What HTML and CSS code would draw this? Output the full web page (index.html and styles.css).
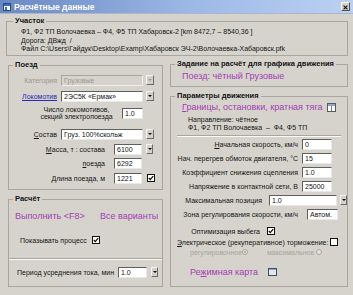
FILE: index.html
```html
<!DOCTYPE html>
<html lang="ru">
<head>
  <meta charset="UTF-8">
  <title>Расчётные данные</title>
  <link rel="stylesheet" href="styles.css">
</head>
<body>
  <div class="window">
    <div class="titlebar">
      <svg class="title-icon" width="8" height="8" viewBox="0 0 8 8">
        <rect x="0.5" y="0.5" width="7" height="7" fill="#fff" stroke="#2b4c8a"/>
        <rect x="1" y="1" width="6" height="2" fill="#3a6ac0"/>
        <rect x="2" y="4" width="2" height="3" fill="#3a6ac0"/>
      </svg>
      <span class="title">Расчётные данные</span>
      <span class="close">
        <svg width="9" height="9" viewBox="0 0 9 9">
          <path d="M2 2 L7 7 M7 2 L2 7" stroke="#111" stroke-width="1.4"/>
        </svg>
      </span>
    </div>

    <div class="body">
      <fieldset class="group section">
        <legend>Участок</legend>
        <div class="info">
          <div>Ф1, Ф2 ТП Волочаевка – Ф4, Ф5 ТП Хабаровск-2 [km 8472,7 – 8540,36 ]</div>
          <div>Дорога: ДВжд &nbsp;/</div>
          <div>Файл C:\Users\Гайдук\Desktop\Examp\Хабаровск ЭЧ-2\Волочаевка-Хабаровск.pfk</div>
        </div>
      </fieldset>

      <div class="columns">
        <div class="col col-left">
          <!-- Train -->
          <fieldset class="group train">
            <legend>Поезд</legend>
            <div class="row r1">
              <span class="lbl lbl-short disabled">Категория</span>
              <span class="field combo disabled">Грузовые</span>
              <span class="drop disabled"><i></i></span>
            </div>
            <div class="row r2">
              <span class="lbl lbl-short link-blue">Локомотив</span>
              <span class="field combo">2ЭС5К «Ермак»</span>
              <span class="drop"><i></i></span>
            </div>
            <div class="row r3">
              <span class="lbl lbl-center">Число локомотивов,<br>секций электропоезда</span>
              <span class="field num-small">1.0</span>
            </div>
            <div class="row r4">
              <span class="lbl lbl-short"><u>С</u>остав</span>
              <span class="field combo">Груз. 100%скольж</span>
              <span class="drop"><i></i></span>
            </div>
            <div class="row r5">
              <span class="lbl lbl-long"><u>М</u>асса, т : состава</span>
              <span class="field num">6100</span>
              <span class="drop small"><i></i></span>
            </div>
            <div class="row r6">
              <span class="lbl lbl-long"><u>п</u>оезда</span>
              <span class="field num">6292</span>
            </div>
            <div class="row r7">
              <span class="lbl lbl-long"><u>Д</u>лина поезда, м</span>
              <span class="field num">1221</span>
              <svg class="check" width="8" height="8" viewBox="0 0 8 8">
                <rect x="0.5" y="0.5" width="7" height="7" fill="#fff" stroke="#111"/>
                <path d="M1.8 4 L3.3 5.6 L6.2 2.2" fill="none" stroke="#111" stroke-width="1.3"/>
              </svg>
            </div>
          </fieldset>

          <!-- Calculation -->
          <fieldset class="group calc">
            <legend>Расчёт</legend>
            <div class="links">
              <span class="link run">Выполнить &lt;F8&gt;</span>
              <span class="link">Все варианты</span>
            </div>
            <div class="row show-process">
              <span class="lbl">Показывать процесс</span>
              <svg class="check" width="8" height="8" viewBox="0 0 8 8">
                <rect x="0.5" y="0.5" width="7" height="7" fill="#fff" stroke="#111"/>
                <path d="M1.8 4 L3.3 5.6 L6.2 2.2" fill="none" stroke="#111" stroke-width="1.3"/>
              </svg>
            </div>
            <div class="separator"></div>
            <div class="row period">
              <span class="lbl">Период усреднения тока, мин</span>
              <span class="field num">1.0</span>
              <span class="drop"><i></i></span>
            </div>
          </fieldset>
        </div>

        <div class="col col-right">
          <fieldset class="group task">
            <legend>Задание на расчёт для графика движения</legend>
            <div class="link task-link">Поезд: чётный Грузовые</div>
          </fieldset>

          <fieldset class="group params">
            <legend>Параметры движения</legend>
            <div class="bounds">
              <span class="link"><u>Г</u>раницы, остановки, кратная тяга</span>
              <svg class="bounds-icon" width="9" height="9" viewBox="0 0 9 9">
                <rect x="0.5" y="0.5" width="8" height="8" fill="#fff" stroke="#5a5a5a"/>
                <rect x="1" y="1" width="7" height="2" fill="#8fa6cf"/>
                <path d="M4.5 3 V8" stroke="#7a7a7a"/>
              </svg>
            </div>
            <div class="direction">
              <div>Направление: чётное</div>
              <div>Ф1, Ф2 ТП Волочаевка &nbsp;– &nbsp;Ф4, Ф5 ТП</div>
            </div>
            <div class="separator"></div>
            <div class="row p-row first">
              <span class="lbl lbl-param"><u>Н</u>ачальная скорость, км/ч</span>
              <span class="field param">0</span>
            </div>
            <div class="row p-row">
              <span class="lbl lbl-param">Нач. перегрев обмоток двигателя, °C</span>
              <span class="field param">15</span>
            </div>
            <div class="row p-row">
              <span class="lbl lbl-param">Коэффициент снижения сцепления</span>
              <span class="field param">1.0</span>
            </div>
            <div class="row p-row">
              <span class="lbl lbl-param">Напряжение в контактной сети, В</span>
              <span class="field param">25000</span>
            </div>
            <div class="row p-row">
              <span class="lbl lbl-maxpos">Максимальная позиция</span>
              <span class="field combo-pos">1.0</span>
              <span class="drop"><i></i></span>
            </div>
            <div class="row p-row">
              <span class="lbl lbl-param">Зона регулирования скорости, км/ч</span>
              <span class="field zone">Автом.</span>
            </div>
            <div class="row opt">
              <span class="lbl lbl-opt">Оптимизация выбега</span>
              <svg class="check" width="8" height="8" viewBox="0 0 8 8">
                <rect x="0.5" y="0.5" width="7" height="7" fill="#fff" stroke="#111"/>
                <path d="M1.8 4 L3.3 5.6 L6.2 2.2" fill="none" stroke="#111" stroke-width="1.3"/>
              </svg>
            </div>
            <div class="row brake">
              <span class="lbl lbl-brake"><u>Э</u>лектрическое (рекуперативное) торможение:</span>
              <svg class="check" width="8" height="8" viewBox="0 0 8 8">
                <rect x="0.5" y="0.5" width="7" height="7" fill="#fff" stroke="#111"/>
              </svg>
            </div>
            <div class="row radios">
              <span class="radio-lbl reg">регулировочное</span>
              <svg width="6" height="6" viewBox="0 0 6 6"><circle cx="3" cy="3" r="2.5" fill="#e4e2dc" stroke="#a8a59e"/><circle cx="3" cy="3" r="1" fill="#a8a59e"/></svg>
              <span class="radio-lbl max">максимальное</span>
              <svg width="6" height="6" viewBox="0 0 6 6"><circle cx="3" cy="3" r="2.5" fill="#e4e2dc" stroke="#a8a59e"/></svg>
            </div>
            <div class="row mode-map">
              <span class="link mode-link">Ре<u>ж</u>имная карта</span>
              <svg width="9" height="8" viewBox="0 0 9 8">
                <rect x="0.5" y="0.5" width="8" height="7" fill="#e8e6e0" stroke="#3c4c7c"/>
                <path d="M1 1.5 H8" stroke="#8fa6cf"/>
              </svg>
            </div>
          </fieldset>
        </div>
      </div>
    </div>
  </div>
</body>
</html>
```

FILE: styles.css
```css
* {
  box-sizing: border-box;
}

body {
  margin: 0;
  background: #d6d3cc;
  font-family: "Liberation Sans", Arial, sans-serif;
  font-size: 7px;
  color: #141414;
}

.window {
  width: 353px;
  height: 295px;
  background: #d6d3cc;
  overflow: hidden;
}

/* Title bar */
.titlebar {
  height: 14px;
  display: flex;
  align-items: center;
  padding: 0 3px;
  background: linear-gradient(to right, #6a88c3, #9db9e6 55%, #bcd1f2);
  border-bottom: 1px solid #aab8cf;
}

.title-icon {
  margin-right: 3px;
}

.title {
  color: #fff;
  font-weight: bold;
  font-size: 8.5px;
}

.close {
  margin-left: auto;
  width: 9px;
  height: 9px;
  background: #d4d0c8;
  border: 1px solid;
  border-color: #fff #555 #555 #fff;
  display: flex;
}

/* Body & groups */
.body {
  padding: 2px 5px 0 6px;
}

fieldset.group {
  margin: 0;
  padding: 0;
  min-width: 0;
  border: 1px solid #aaa69f;
}

fieldset.group legend {
  margin-left: 4px;
  padding: 0 2px;
  font-weight: bold;
  font-size: 7.5px;
  line-height: 10px;
}

.section {
  height: 40px;
}

.section legend {
  margin-left: 6px !important;
}

.info {
  padding: 2px 0 0 14px;
  line-height: 8.5px;
}

.columns {
  display: flex;
  gap: 7px;
  margin: 3px 0 0 2px;
}

.col {
  display: flex;
  flex-direction: column;
  gap: 4px;
}

.col-left {
  width: 155px;
  padding-top: 1px;
}

.col-right {
  width: 178px;
}

/* Rows and controls */
.row {
  display: flex;
  align-items: center;
  height: 12px;
}

.lbl {
  white-space: nowrap;
}

.field {
  height: 11px;
  line-height: 9px;
  padding-left: 2px;
  background: #fff;
  border: 1px solid;
  border-color: #5e5e5e #e8e8e8 #e8e8e8 #5e5e5e;
  white-space: nowrap;
  overflow: hidden;
}

.field.disabled {
  background: #d6d3cc;
  color: #9a978f;
  border-color: #a9a69e #eeece6 #eeece6 #a9a69e;
}

.drop {
  width: 8px;
  height: 10px;
  margin-left: 3px;
  background: #d4d0c8;
  border: 1px solid;
  border-color: #f4f4f4 #6c6c6c #6c6c6c #f4f4f4;
  display: flex;
  align-items: center;
  justify-content: center;
}

.drop i {
  border-left: 2px solid transparent;
  border-right: 2px solid transparent;
  border-top: 2px solid #111;
}

.drop.disabled i {
  border-top-color: #9a978f;
}

.check {
  flex: none;
}

.disabled {
  color: #9a978f;
}

.link-blue {
  color: #2a2ab4;
  text-decoration: underline;
}

.link {
  color: #a43db4;
  font-size: 9px;
  line-height: 12px;
  white-space: nowrap;
}

/* Train group */
.train {
  height: 130px;
}

.lbl-short {
  width: 48px;
  text-align: right;
  margin-right: 4px;
}

.combo {
  width: 82px;
}

.r1 { margin-top: 4px; }
.r2 { margin-top: 4px; }
.r3 { margin-top: 1px; height: 20px; padding-left: 31px; }
.r4 { margin-top: 5px; }
.r5 { margin-top: 3px; }
.r6 { margin-top: 2px; }
.r7 { margin-top: 3px; }

.lbl-center {
  width: 73px;
  text-align: center;
  line-height: 7.5px;
  margin-right: 9px;
}

.num-small {
  width: 21px;
}

.lbl-long {
  width: 96px;
  text-align: right;
  margin-right: 9px;
}

.num {
  width: 28px;
}

.drop.small {
  width: 7px;
  margin-left: 4px;
}

.r7 .check {
  margin-left: 5px;
}

/* Calculation group */
.calc {
  height: 93px;
}

.links {
  display: flex;
  padding-left: 6px;
  margin-top: 6px;
}

.run {
  width: 85px;
}

.show-process {
  margin-top: 12px;
  padding-left: 11px;
}

.show-process .lbl {
  width: 72px;
}

.separator {
  height: 2px;
  border-top: 1px solid #a9a69e;
  border-bottom: 1px solid #fbfaf7;
}

.calc .separator {
  margin-top: 12px;
}

.period {
  margin-top: 6px;
  padding-left: 8px;
}

.period .lbl {
  width: 101px;
}

.period .num {
  width: 29px;
}

.period .drop {
  width: 7px;
  margin-left: 4px;
}

/* Task group */
.task {
  height: 28px;
}

.task-link {
  margin: 1px 0 0 11px;
}

/* Movement parameters */
.params {
  height: 196px;
}

.bounds {
  display: flex;
  align-items: center;
  padding-left: 11px;
}

.bounds .link {
  width: 145px;
}

.direction {
  margin-top: 3px;
  padding-left: 17px;
  line-height: 7.5px;
}

.params .separator {
  margin: 4px 6px 0 6px;
}

.p-row {
  margin-top: 2px;
}

.p-row.first {
  margin-top: 1px;
}

.lbl-param {
  width: 127px;
  text-align: right;
  margin-right: 4px;
}

.param {
  width: 30px;
}

.lbl-maxpos {
  width: 91px;
  text-align: right;
  margin-right: 7px;
}

.combo-pos {
  width: 68px;
}

.p-row .drop {
  width: 7px;
}

.zone {
  width: 31px;
  margin-left: 5px;
}

.opt {
  margin-top: 6px;
  height: 10px;
}

.lbl-opt {
  width: 89px;
  text-align: right;
  margin-right: 7px;
}

.brake {
  margin-top: 1px;
  height: 10px;
}

.lbl-brake {
  width: 159px;
  padding-left: 6px;
}

.radios {
  height: 10px;
  padding-left: 19px;
  color: #a6a39c;
}

.radio-lbl.reg {
  width: 52px;
}

.radio-lbl.max {
  width: 49px;
  margin-left: 19px;
}

.mode-map {
  margin-top: 9px;
  padding-left: 19px;
}

.mode-link {
  width: 78px;
}
```
